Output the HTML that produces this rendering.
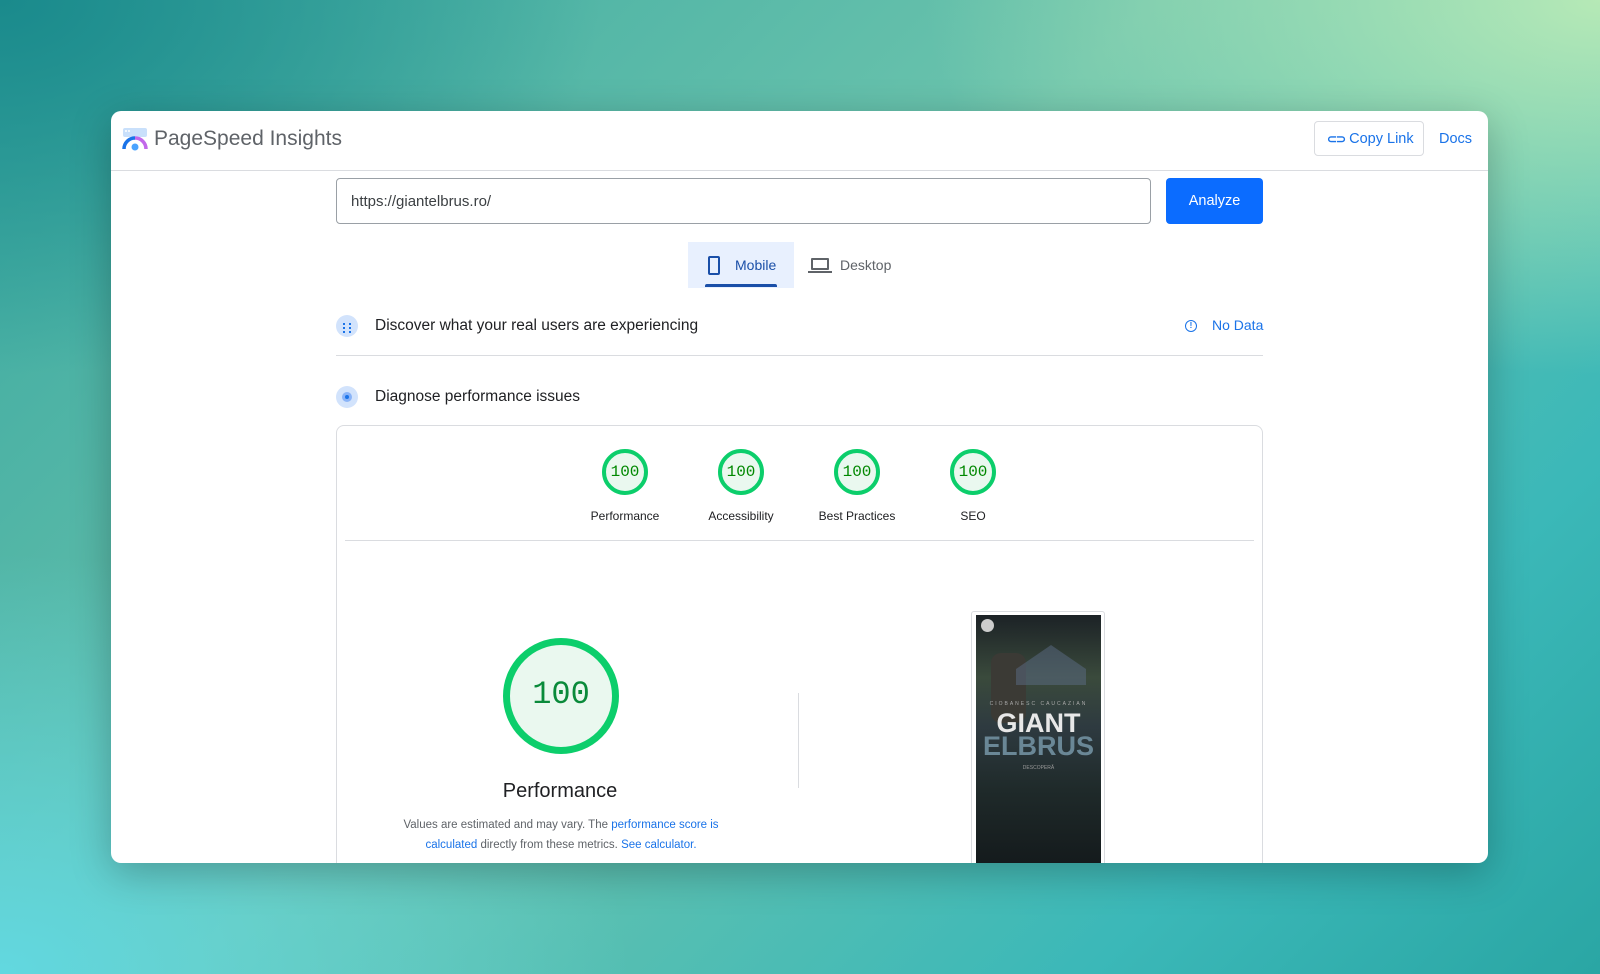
<!DOCTYPE html>
<html><head><style>
*{margin:0;padding:0;box-sizing:border-box}
body{width:1600px;height:974px;overflow:hidden;position:relative;font-family:"Liberation Sans",sans-serif;
background:
radial-gradient(ellipse 900px 600px at 0% 100%, #62d8e0 0%, rgba(98,216,224,0) 70%),
radial-gradient(ellipse 900px 500px at 100% 0%, #b6e9b6 0%, rgba(182,233,182,0) 75%),
radial-gradient(ellipse 800px 500px at 0% 0%, #1a8a8c 0%, rgba(26,138,140,0) 75%),
linear-gradient(135deg,#3aa8a0 0%,#6cc4ad 45%,#3bb8b8 80%,#2aa6a4 100%);}
.win{position:absolute;left:111px;top:111px;width:1377px;height:752px;background:#fff;border-radius:10px;overflow:hidden;box-shadow:0 10px 40px rgba(0,0,0,.25)}
.a{position:absolute}
.blue{color:#1a73e8}
.sc{width:46px;height:46px;border:4px solid #0cce6b;border-radius:50%;background:#eaf8ef;color:#008800;font-family:'Liberation Mono',monospace;font-size:16px;text-align:center;line-height:38px;top:0}
</style></head><body>
<div class="win">
 <svg class="a" style="left:11px;top:16px" width="26" height="24" viewBox="0 0 26 24">
  <rect x="1" y="1" width="24" height="9" rx="2" fill="#c9e0fb"/>
  <circle cx="4" cy="4" r="1" fill="#fff"/><circle cx="7" cy="4" r="1" fill="#fff"/>
  <path d="M2 22 A11 11 0 0 1 13 11" stroke="#1a73e8" stroke-width="3.5" fill="none"/>
  <path d="M13 11 A11 11 0 0 1 24 22" stroke="#c268ea" stroke-width="3.5" fill="none"/>
  <circle cx="13" cy="20" r="3.5" fill="#4aa3ff"/>
 </svg>
 <div class="a" style="left:43px;top:16px;font-size:21px;color:#5f6368">PageSpeed Insights</div>
 <div class="a" style="left:1203px;top:10px;width:110px;height:35px;border:1px solid #dadce0;border-radius:4px;font-size:14.5px;color:#1a73e8;line-height:35px;padding-left:12px">
  <span style="font-weight:bold;letter-spacing:-1px;font-size:12px">⊂⊃</span>&nbsp;Copy Link</div>
 <div class="a blue" style="left:1328px;top:20px;font-size:14.5px">Docs</div>
 <div class="a" style="left:0;top:59px;width:1377px;height:1px;background:#dadce0"></div>

 <div class="a" style="left:225px;top:67px;width:815px;height:46px;border:1px solid #9aa0a6;border-radius:4px;font-size:15px;color:#3c4043;line-height:46px;padding-left:14px">https://giantelbrus.ro/</div>
 <div class="a" style="left:1055px;top:67px;width:97px;height:46px;background:#0b6cff;border-radius:4px;color:#fff;font-size:14.5px;text-align:center;line-height:47px">Analyze</div>

 <div class="a" style="left:577px;top:131px;width:106px;height:46px;background:#e8f0fe"></div>
 <div class="a" style="left:594px;top:173px;width:72px;height:3px;background:#1a4fa8;border-radius:2px 2px 0 0"></div>
 <div class="a" style="left:597px;top:145px;width:12px;height:19px;border:2px solid #1a4fa8;border-radius:2px"></div>
 <div class="a" style="left:624px;top:146px;font-size:14px;color:#1a4fa8">Mobile</div>
 <div class="a" style="left:700px;top:147px;width:18px;height:12px;border:2px solid #5f6368;border-radius:1px"></div>
 <div class="a" style="left:697px;top:160px;width:24px;height:2px;background:#5f6368"></div>
 <div class="a" style="left:729px;top:146px;font-size:14px;color:#5f6368">Desktop</div>

 <div class="a" style="left:225px;top:204px;width:22px;height:22px;border-radius:50%;background:#d2e3fc"></div>
 <div class="a" style="left:232px;top:212px;width:8px;height:10px;border-left:2px dotted #1a73e8;border-right:2px dotted #1a73e8"></div>
 <div class="a" style="left:264px;top:206px;font-size:15.5px;color:#202124">Discover what your real users are experiencing</div>
 <div class="a" style="left:1074px;top:209px;width:12px;height:12px;border:1.5px solid #1a73e8;border-radius:50%;font-size:8px;color:#1a73e8;text-align:center;line-height:9px;font-weight:bold">!</div>
 <div class="a blue" style="left:1101px;top:206px;font-size:14px">No Data</div>
 <div class="a" style="left:225px;top:244px;width:927px;height:1px;background:#dadce0"></div>

 <div class="a" style="left:225px;top:275px;width:22px;height:22px;border-radius:50%;background:#d2e3fc"></div>
 <div class="a" style="left:231px;top:281px;width:10px;height:10px;border-radius:50%;background:#8ab4f8"></div>
 <div class="a" style="left:234px;top:284px;width:4px;height:4px;border-radius:50%;background:#1a73e8"></div>
 <div class="a" style="left:264px;top:277px;font-size:15.5px;color:#202124">Diagnose performance issues</div>

 <div class="a" style="left:225px;top:314px;width:927px;height:460px;border:1px solid #dadce0;border-radius:8px"></div>
 <div class="a" style="left:234px;top:429px;width:909px;height:1px;background:#dadce0"></div>

 <div class="a sc" style="left:491px;top:338px">100</div>
 <div class="a sc" style="left:607px;top:338px">100</div>
 <div class="a sc" style="left:723px;top:338px">100</div>
 <div class="a sc" style="left:839px;top:338px">100</div>
 <div class="a" style="left:444px;top:398px;width:140px;text-align:center;font-size:12px;color:#202124">Performance</div>
 <div class="a" style="left:560px;top:398px;width:140px;text-align:center;font-size:12px;color:#202124">Accessibility</div>
 <div class="a" style="left:676px;top:398px;width:140px;text-align:center;font-size:12px;color:#202124">Best Practices</div>
 <div class="a" style="left:792px;top:398px;width:140px;text-align:center;font-size:12px;color:#202124">SEO</div>

 <div class="a" style="left:392px;top:527px;width:116px;height:116px;border:7px solid #0cce6b;border-radius:50%;background:#eaf8ef;color:#0a8a3a;font-family:'Liberation Mono',monospace;font-size:32px;text-align:center;line-height:100px">100</div>
 <div class="a" style="left:329px;top:669px;width:240px;text-align:center;font-size:20px;color:#202124">Performance</div>
 <div class="a" style="left:270px;top:705px;width:360px;text-align:center;font-size:11.5px;color:#5f6368;line-height:19.5px">Values are estimated and may vary. The <span class="blue">performance score is calculated</span> directly from these metrics. <span class="blue">See calculator.</span></div>
 <div class="a" style="left:687px;top:582px;width:1px;height:95px;background:#dadce0"></div>

 <div class="a" style="left:860px;top:500px;width:134px;height:260px;border:1px solid #dadce0;border-radius:3px;background:#fff"></div>
 <div class="a" style="left:865px;top:504px;width:125px;height:250px;background:linear-gradient(180deg,#1c2226 0%,#3a4a3c 25%,#2e3a40 45%,#1f2a2a 70%,#141a1c 100%);overflow:hidden">
  <div class="a" style="left:5px;top:4px;width:13px;height:13px;border-radius:50%;background:#ccc"></div>
  <div class="a" style="left:15px;top:38px;width:35px;height:70px;background:#3b3a35;border-radius:10px"></div>
  <div class="a" style="left:40px;top:30px;width:70px;height:40px;background:#5b6c86;opacity:.5;clip-path:polygon(50% 0,100% 60%,100% 100%,0 100%,0 60%)"></div>
  <div class="a" style="left:0;top:86px;width:125px;text-align:center;font-size:5px;letter-spacing:2px;color:#aaa">CIOBANESC CAUCAZIAN</div>
  <div class="a" style="left:0;top:94px;width:125px;text-align:center;font-size:27px;font-weight:bold;color:#e8e8e8;line-height:28px">GIANT</div>
  <div class="a" style="left:0;top:117px;width:125px;text-align:center;font-size:27px;font-weight:bold;color:#6a8796;line-height:28px">ELBRUS</div>
  <div class="a" style="left:0;top:150px;width:125px;text-align:center;font-size:5px;color:#999">DESCOPERĂ</div>
 </div>
</div>
</body></html>
